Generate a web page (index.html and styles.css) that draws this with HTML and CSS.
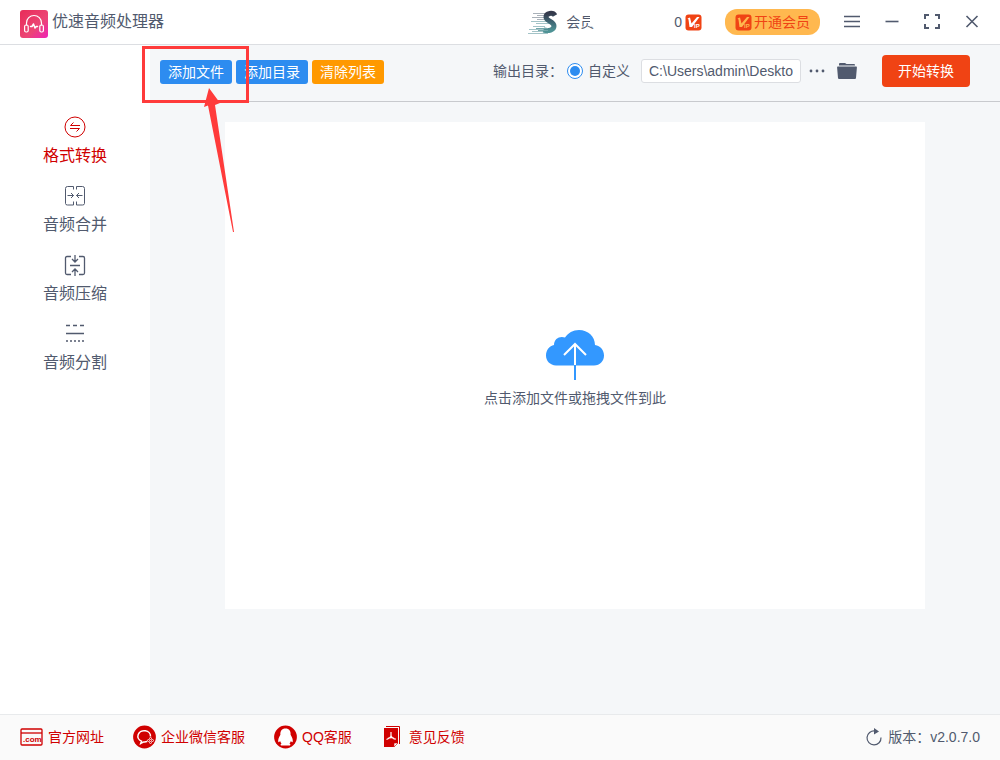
FILE: index.html
```html
<!DOCTYPE html>
<html lang="zh-CN">
<head>
<meta charset="utf-8">
<meta name="viewport" content="width=device-width, initial-scale=1">
<title>优速音频处理器</title>
<link rel="stylesheet" href="styles.css">
</head>
<body>
<header class="header">
  <svg class="header__logo" width="28" height="28" viewBox="0 0 28 28" aria-hidden="true">
    <defs><linearGradient id="pink" x1="0" y1="0" x2="1" y2="1"><stop offset="0" stop-color="#e82b58"/><stop offset=".6" stop-color="#ec4575"/><stop offset="1" stop-color="#ef22b8"/></linearGradient></defs>
    <rect width="28" height="28" rx="3" fill="url(#pink)"/>
    <g fill="none" stroke="#fff" stroke-width="1.200" stroke-linecap="round" stroke-linejoin="round">
      <path d="M6.500 15v-2a7.500 7.500 0 0 1 15 0v2"/>
      <rect x="4.600" y="15" width="3.600" height="7" rx="1.500"/>
      <rect x="19.800" y="15" width="3.600" height="7" rx="1.500"/>
      <path d="M10.500 16.500h1.500l1.500-2.500 1.500 4 1.300-1.500h1.200" stroke-width="1.500"/>
    </g>
  </svg>
  <h1 class="header__title">优速音频处理器</h1>
  <div class="account">
    <svg width="30" height="26" viewBox="0 0 30 26" aria-hidden="true">
      <defs><linearGradient id="teal" x1="0" y1="0" x2="0" y2="1"><stop offset="0" stop-color="#34394b"/><stop offset=".5" stop-color="#3f6674"/><stop offset="1" stop-color="#4e9295"/></linearGradient></defs>
      <g fill="none" stroke-width="1.200"><path d="M5 4.500h14M9 6.500h10M4 8.500h13M9 10.500h9" stroke="#a9b1b9"/><path d="M3 12.500h18M8 14.500h14M5 17.500h12M1 20.500h20M4 22.500h18M0 24.500h20" stroke="#a3c3c7"/></g>
      <path d="M27 6.500c-2-3.500-9-2.500-9 1.500 0 4.500 8 4 8 9 0 4-5.500 5.500-10.500 4" fill="none" stroke="url(#teal)" stroke-width="5"/>
      <path d="M8 19.500h12M10 21.500h10" stroke="#72a6aa"/>
    </svg>
    <span class="account__name">会员</span>
    <span class="account__points">0</span>
    <svg class="vip" width="17" height="17" viewBox="0 0 17 17" role="img" aria-label="VIP">
      <rect x=".500" y=".500" width="16" height="16" rx="3" fill="#f04314"/>
      <path d="M2.500 4.500l2.500-1 1.500 6L12 3h2.500L7 13H4.500L3.500 5.500z"/>
      <text class="vip__text" x="9" y="14">IP</text>
    </svg>
  </div>
  <button class="join" type="button">
    <svg class="vip vip--gold" width="17" height="17" viewBox="0 0 17 17" aria-hidden="true">
      <rect x=".500" y=".500" width="16" height="16" rx="3" fill="#f04314"/>
      <path d="M2.500 4.500l2.500-1 1.500 6L12 3h2.500L7 13H4.500L3.500 5.500z"/>
      <text class="vip__text" x="9" y="14">IP</text>
    </svg>开通会员</button>
  <div class="window-controls">
    <button class="icon-button" type="button" aria-label="菜单"><svg width="16" height="16" viewBox="0 0 16 16"><path d="M0 2.500h16M0 7.500h16M0 12.500h16" stroke-width="1.600"/></svg></button>
    <button class="icon-button" type="button" aria-label="最小化"><svg width="16" height="16" viewBox="0 0 16 16"><path d="M1.500 7.500h13" stroke-width="1.600"/></svg></button>
    <button class="icon-button" type="button" aria-label="最大化"><svg width="16" height="16" viewBox="0 0 16 16"><path d="M1 5V1h4M11 1h4v4M15 10v4h-4M5 14H1v-4"/></svg></button>
    <button class="icon-button" type="button" aria-label="关闭"><svg width="16" height="16" viewBox="0 0 16 16"><path d="M2.500 2l11 11M13.500 2l-11 11" stroke-width="1.600"/></svg></button>
  </div>
</header>

<div class="body">
  <nav class="sidebar">
    <a class="nav-item nav-item--active" href="#convert">
      <svg width="22" height="22" viewBox="0 0 22 22"><circle cx="11" cy="11" r="10"/><path d="M16 9.500H6.500l3-3M6 12.500h9.500l-3 3"/></svg>格式转换</a>
    <a class="nav-item" href="#merge">
      <svg width="22" height="22" viewBox="0 0 22 22"><path d="M9.500 4.500v-3H3.500q-2 0-2 2v15q0 1.500 2 1.500h6v-3.500M12.500 4.500v-3h6q2 0 2 2v15q0 1.500-2 1.500h-6v-3.500M3.500 10.500h6M7 8l2.500 2.500L7 13M18.500 10.500h-6M15 8l-2.500 2.500L15 13"/></svg>音频合并</a>
    <a class="nav-item" href="#compress">
      <svg width="22" height="22" viewBox="0 0 22 22"><path d="M7 2.500H3q-1.500 0-1.500 1.500v15q0 1.500 1.500 1.500h4M15 2.500h4q1.500 0 1.500 1.500v15q0 1.500-1.500 1.500h-4M6 11.500h10M11 1v7M8 5l3 3 3-3M11 22v-7M8 18l3-3 3 3" stroke-width="1.300"/></svg>音频压缩</a>
    <a class="nav-item" href="#split">
      <svg width="22" height="22" viewBox="0 0 22 22"><path d="M2 2.500h4M9 2.500h4M16 2.500h4M2 10.500h18" stroke-width="1.500"/><path d="M2 18h18" stroke-width="1.500" stroke-dasharray="2 2"/></svg>音频分割</a>
  </nav>
  <main class="main">
    <div class="toolbar">
      <div class="tools">
        <button class="tool" type="button">添加文件</button>
        <button class="tool" type="button">添加目录</button>
        <button class="tool tool--warn" type="button">清除列表</button>
      </div>
      <div class="output">
        <span>输出目录：</span>
        <label class="choice"><input class="choice__radio" type="radio" name="output" checked>自定义</label>
        <input class="path" type="text" aria-label="输出目录" value="C:\Users\admin\Deskto">
        <button class="mini" type="button" aria-label="浏览"><svg width="16" height="16" viewBox="0 0 16 16"><circle cx="2" cy="8" r="1.400"/><circle cx="8" cy="8" r="1.400"/><circle cx="14" cy="8" r="1.400"/></svg></button>
        <button class="mini mini--folder" type="button" aria-label="打开文件夹"><svg width="20" height="18" viewBox="0 0 20 18"><path d="M2 3.500V2q0-1 1-1h5l1.500 1H17q1 0 1 1v.500z"/><path d="M.800 4.500h18.400q.800 0 .700 1L19 16q-.100 1-1 1H2q-.900 0-1-1L.100 5.500q-.100-1 .700-1z"/></svg></button>
        <button class="start" type="button">开始转换</button>
      </div>
    </div>
    <div class="workspace">
      <button class="drop" type="button">
        <svg width="58" height="50" viewBox="0 0 58 50" aria-hidden="true">
          <path d="M10 35.500C4 35 0 31 0 25.500 0 20 3.500 16 8 15c0-6.500 6-9.500 11-7.500C22 3 27 0 33 0c9 0 16 6.500 16 15 5.500 1 9 5 9 10.500C58 31 54 35.500 48 35.500z" fill="#3398ff"/>
          <path d="M29 35v15" stroke="#3398ff" stroke-width="2"/>
          <path d="M29 35V14M18 25l11-11 11 11" fill="none" stroke="#fff" stroke-width="2"/>
        </svg>
        <span>点击添加文件或拖拽文件到此</span>
      </button>
    </div>
  </main>
</div>

<footer class="footer">
  <a class="footer__link" href="#site"><svg width="23" height="24" viewBox="0 0 23 24" aria-hidden="true"><rect x="1" y="4" width="21" height="16" rx="1" fill="none" stroke="#d00000" stroke-width="1.300"/><path d="M1 8h21" stroke="#d00000" stroke-width="1.300"/><text class="com" x="3" y="17">.com</text></svg>官方网址</a>
  <a class="footer__link" href="#wechat"><svg width="23" height="24" viewBox="0 0 23 24" aria-hidden="true"><circle cx="11.500" cy="12" r="11.400" fill="#d00000"/><path d="M17.500 11.500a6.300 5.500 0 1 0-9 4.700l-.800 2.300 3-1.600q2 .200 3.500-.500" fill="none" stroke="#fff" stroke-width="1.500"/><g fill="none" stroke="#fff" stroke-width=".8"><circle cx="17.500" cy="13.500" r="1"/><circle cx="15.500" cy="15.500" r="1"/><circle cx="19.500" cy="15.500" r="1"/><circle cx="17.500" cy="17.500" r="1"/></g></svg>企业微信客服</a>
  <a class="footer__link" href="#qq"><svg width="23" height="24" viewBox="0 0 23 24" aria-hidden="true"><circle cx="11.500" cy="12" r="11.400" fill="#d00000"/><path d="M11.500 3.500c-3.800 0-5.400 2.500-5.100 6.300C4.800 12.500 3.800 15 4.300 17c.5.500 1.300-.3 1.800-1 .2 1 .7 1.800 1.400 2.400-1.500.8-1.200 2.100.5 2.100h7c1.700 0 2-1.300.5-2.100.7-.6 1.200-1.400 1.400-2.400.5.700 1.300 1.500 1.800 1 .5-2-.5-4.500-2.100-7.200.3-3.800-1.300-6.300-5.100-6.300z" fill="#fff"/></svg>QQ客服</a>
  <a class="footer__link" href="#feedback"><svg width="23" height="24" viewBox="0 0 23 24" aria-hidden="true"><path d="M3 3h14v14.500L12.500 22H3z" fill="#d00000"/><path d="M5 1.500h13.500V19" fill="none" stroke="#d00000"/><path d="M13 22v-4h4z" fill="#fff" stroke="#d00000" stroke-width=".6"/><path d="M10 7v3.500c0 1.500-2 3-4.500 4M10 11c1 2 2.500 3 4.800 3.200M7 13.200c2-.8 4-.9 6-.2" fill="none" stroke="#fff" stroke-width="1.200"/></svg>意见反馈</a>
  <div class="version"><svg width="16" height="18" viewBox="0 0 16 18" aria-hidden="true"><path d="M15 9.500a7 7 0 1 1-6-6.500" fill="none" stroke="#515a6e" stroke-width="1.200"/><path d="M8 0l5 3.500-5 3z" fill="#515a6e"/></svg>版本：v2.0.7.0</div>
</footer>

<svg class="callout" width="107" height="188" viewBox="0 0 107 188" aria-hidden="true">
  <rect x="1.500" y="1.500" width="104" height="54" fill="none" stroke="#ff3b3b" stroke-width="3"/>
  <path d="M67 42L62 61l4-1.500L91 186h1L73 59l5-2z" fill="#ff3b3b"/>
</svg>
</body>
</html>
```
FILE: styles.css
```css
* { box-sizing: border-box; }

body {
  position: relative;
  display: flex;
  flex-direction: column;
  min-height: 100vh;
  margin: 0;
  background: #fff;
  color: #515a6e;
  font: 400 14px/20px "Liberation Sans", "Noto Sans CJK SC", sans-serif;
}

button, input { font: inherit; color: inherit; }

button {
  padding: 0;
  border: 0;
  background: none;
  cursor: pointer;
}

a { text-decoration: none; }
svg { flex: none; display: block; }

.vip { fill: #fff; }
.vip--gold { fill: #ffb84f; }
.vip__text { font: bold 6px "Liberation Sans", sans-serif; }
.com { font: bold 8px "Liberation Sans", sans-serif; fill: #d00000; }

.header {
  display: flex;
  align-items: center;
  height: 45px;
  padding: 0 8px 0 20px;
  border-bottom: 1px solid #dcdee2;
}

.header__logo { margin-top: 4px; }

.header__title {
  margin: 0 auto 0 4px;
  font-size: 16px;
  font-weight: 400;
  line-height: 22px;
}

.account { display: flex; align-items: center; }

.account__name {
  position: relative;
  width: 108px;
  margin-left: 8px;
}

/* Hides the end of the member's name */
.account__name::after {
  content: "";
  position: absolute;
  top: 0;
  left: 24px;
  width: 12px;
  height: 14px;
  background: #fff;
}

.account__points { margin-right: 3px; }

.join {
  display: flex;
  align-items: center;
  gap: 2px;
  height: 26px;
  margin: 0 12px 0 23px;
  padding: 0 10px;
  border-radius: 12px;
  background: #ffb84f;
  color: #f04314;
}

.window-controls { display: flex; }

.icon-button {
  display: grid;
  place-items: center;
  width: 40px;
  height: 40px;
}

.icon-button svg { fill: none; stroke: #515a6e; stroke-width: 2; }

.body { display: flex; flex: 1; }

.sidebar {
  display: flex;
  flex-direction: column;
  gap: 18px;
  width: 150px;
  padding-top: 71px;
}

.nav-item {
  display: flex;
  flex-direction: column;
  align-items: center;
  gap: 7px;
  color: #515a6e;
  font-size: 16px;
  line-height: 22px;
}

.nav-item--active { color: #d00000; }
.nav-item svg { fill: none; stroke: currentColor; stroke-width: 1; }

.main {
  display: flex;
  flex: 1;
  flex-direction: column;
  min-width: 0;
  background: #f5f7f9;
}

.toolbar {
  display: flex;
  align-items: center;
  height: 57px;
  padding: 0 30px 4px 10px;
  border-bottom: 1px solid #c8cace;
}

.tools { display: flex; gap: 4px; padding-top: 2px; }

.tool {
  height: 24px;
  padding: 0 8px;
  border-radius: 3px;
  background: #2d8cf0;
  color: #fff;
}

.tool--warn { background: #ff9900; }

.output { display: flex; align-items: center; margin-left: auto; }
.choice { display: flex; align-items: center; gap: 5px; margin: 0 11px 0 4px; }

.choice__radio {
  display: grid;
  place-items: center;
  width: 16px;
  height: 16px;
  margin: 0;
  border: 1px solid #2d8cf0;
  border-radius: 50%;
  background: #fff;
  appearance: none;
}

.choice__radio:checked::before {
  content: "";
  width: 10px;
  height: 10px;
  border-radius: 50%;
  background: #2d8cf0;
}

.path {
  width: 160px;
  height: 24px;
  padding: 0 7px;
  border: 1px solid #dcdee2;
  border-radius: 3px;
  background: #fff;
}

.mini { margin-left: 8px; }
.mini--folder { margin-left: 12px; }
.mini svg { fill: #515a6e; }

.start {
  height: 32px;
  margin-left: 25px;
  padding: 0 16px;
  border-radius: 4px;
  background: #f04314;
  color: #fff;
}

.workspace {
  display: flex;
  flex: 1;
  padding: 20px 75px 105px;
}

.drop {
  display: flex;
  flex: 1;
  flex-direction: column;
  align-items: center;
  justify-content: center;
  gap: 8px;
  padding-top: 6px;
  background: #fff;
}

.footer {
  display: flex;
  align-items: center;
  gap: 29px;
  height: 46px;
  padding: 0 20px 2px;
  border-top: 1px solid #e8eaec;
  background: #fafafa;
}

.footer__link {
  display: flex;
  align-items: center;
  gap: 5px;
  color: #d00000;
}

.version {
  display: flex;
  align-items: center;
  gap: 6px;
  margin-left: auto;
}

.callout {
  position: absolute;
  top: 46px;
  left: 142px;
  pointer-events: none;
}
```
